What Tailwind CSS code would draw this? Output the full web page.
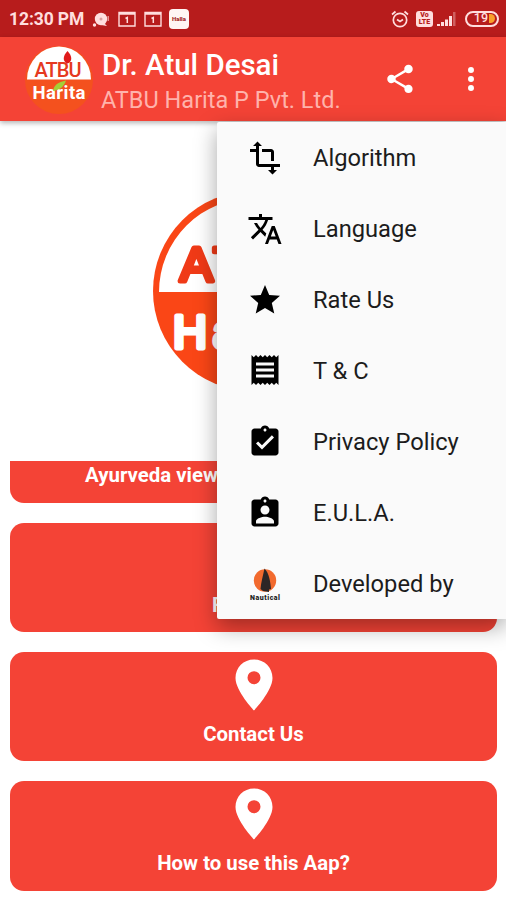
<!DOCTYPE html>
<html lang="en">
  <head>
    <meta charset="UTF-8" />
    <meta name="viewport" content="width=device-width, initial-scale=1.0" />
    <title>ATBU Harita</title>
    <script src="https://cdn.jsdelivr.net/npm/@tailwindcss/browser@4"></script>
  </head>
  <body class="bg-white font-['Roboto',sans-serif]">
    <div class="relative flex h-[900px] w-[506px] flex-col overflow-hidden bg-white">
      <!-- Status bar -->
      <div class="flex h-[37px] shrink-0 items-center bg-[#b71c1c] pt-[2px] pl-[9px] pr-[7px] text-[#ffdede]">
        <span class="w-[83px] whitespace-nowrap text-[17.500px] font-bold tracking-[-0.100px]">12:30 PM</span>
        <svg class="h-4 w-[18px]" viewBox="0 0 18 16" fill="currentColor">
          <circle cx="9" cy="7" r="6.200" />
          <circle cx="2.500" cy="13" r="1.700" />
          <path d="M11 10l4 4-6-1z" />
          <path d="M15.500 4h1.500v5h-1.500z" opacity=".6" />
          <circle cx="9" cy="7" r="1.500" fill="#dba0a0" />
        </svg>
        <svg class="ml-[8px] h-4 w-[18px] -translate-y-px" viewBox="0 0 18 16" fill="none" stroke="currentColor">
          <path d="M1 1.500h16v13.500H1z" stroke-width="1.400" />
          <path d="M1 2.500h16" stroke-width="2.500" />
          <path d="M7.500 7.500L9.300 6.500v5.500" stroke-width="1.500" />
        </svg>
        <svg class="ml-[8px] h-4 w-[18px] -translate-y-px" viewBox="0 0 18 16" fill="none" stroke="currentColor">
          <path d="M1 1.500h16v13.500H1z" stroke-width="1.400" />
          <path d="M1 2.500h16" stroke-width="2.500" />
          <path d="M7.500 7.500L9.300 6.500v5.500" stroke-width="1.500" />
        </svg>
        <div class="ml-[7px] flex h-5 w-5 -translate-y-px items-center justify-center rounded-[4px] bg-[#fff6f4] text-[6px] font-black text-[#a32b2b]">Halla</div>
        <svg class="ml-auto h-[18px] w-[18px] -translate-y-px" viewBox="0 0 18 18" fill="none" stroke="currentColor" stroke-width="1.700">
          <circle cx="9" cy="10" r="6.700" />
          <path d="M1 4.500L4.500 1.500M17 4.500L13.500 1.500M6 9.500l3 2 3-2" />
        </svg>
        <div class="ml-[7px] flex h-4 w-[17px] -translate-y-px flex-col items-center justify-center rounded-[3px] bg-[#ffdede] text-[7px] leading-[7px] font-black text-[#b71c1c]">
          <span>Vo</span><span>LTE</span>
        </div>
        <svg class="ml-[4px] h-4 w-[20px] -translate-y-px" viewBox="0 0 20 16" fill="currentColor">
          <path d="M0 13h3v2H0zM4 11h3v4H4zM8 8.500h3V15H8zM12 5h3v10h-3z" />
          <path d="M16 1h2.500v14H16z" opacity=".35" />
        </svg>
        <div class="ml-[8px] flex h-4 w-[34px] -translate-y-px items-center justify-end rounded-full border-2 border-[#ffdede] pr-[2px] text-[12.500px] leading-none font-medium">
          19<span class="ml-px h-[9px] w-[6px] rounded-r-full bg-[#f9a02b]"></span>
        </div>
      </div>

      <!-- App bar -->
      <div class="z-10 flex h-[84px] shrink-0 items-center bg-[#f44336] pl-[25px] shadow-[0_2px_5px_rgba(0,0,0,0.3)]">
        <svg class="h-[70px] w-[68px] shrink-0" viewBox="0 0 68 70">
          <circle cx="34" cy="36" r="34" fill="#f4511e" />
          <path d="M2 35.500a32 33 0 0 1 64 0z" fill="#fff" />
          <text x="33" y="33" text-anchor="middle" font-family="Roboto" font-size="20" font-weight="500" fill="#e53920" textLength="47">ATBU</text>
          <path d="M42.500 7c5 5 5 11 0 12.500c-5-1.500-5-7.500 0-12.500z" fill="#e01b1b" />
          <text x="34" y="54.500" text-anchor="middle" font-family="Roboto" font-size="18.500" font-weight="700" fill="#fff" textLength="53">Harita</text>
          <path d="M28 47c1-6 5-9 13-10.500c-2 6-6 9.500-13 10.500z" fill="#a4d037" />
        </svg>
        <div class="ml-[8px] flex w-[285px] shrink-0 flex-col pt-[8px] whitespace-nowrap">
          <span class="pl-px text-[29.500px] leading-[34px] font-medium tracking-[-0.020px] text-white">Dr. Atul Desai</span>
          <span class="text-[23.500px] leading-[36px] text-[#ffb3ac]">ATBU Harita P Pvt. Ltd.</span>
        </div>
        <svg class="h-[34px] w-[34px] shrink-0 -translate-x-[3px]" viewBox="0 0 24 24" fill="#fff">
          <path d="M18 16.080c-.76 0-1.440.3-1.960.77L8.910 12.700c.05-.23.09-.46.09-.7s-.04-.47-.09-.7l7.050-4.110c.54.5 1.250.81 2.040.81 1.660 0 3-1.340 3-3s-1.340-3-3-3-3 1.340-3 3c0 .24.04.47.09.7L8.040 9.810C7.500 9.310 6.790 9 6 9c-1.660 0-3 1.340-3 3s1.340 3 3 3c.79 0 1.500-.31 2.040-.81l7.120 4.160c-.05.21-.08.43-.08.65 0 1.610 1.310 2.920 2.920 2.920s2.920-1.310 2.920-2.920-1.310-2.920-2.920-2.920z" />
        </svg>
        <svg class="ml-[34px] h-[34px] w-[34px] shrink-0" viewBox="0 0 24 24" fill="#fff">
          <circle cx="12" cy="5.700" r="2.100" /><circle cx="12" cy="12" r="2.100" /><circle cx="12" cy="18.300" r="2.100" />
        </svg>
      </div>

      <!-- Page content -->
      <div class="flex h-[340px] shrink-0 justify-center pt-[70px]">
        <svg class="h-[200px] w-[200px]" viewBox="0 0 200 200">
          <circle cx="100" cy="100" r="100" fill="#fa4616" />
          <path d="M6 101a94 94 0 0 1 188 0z" fill="#fff" />
          <text x="27" y="90" font-family="Liberation Sans" font-size="49" fill="#f03a17" stroke="#f03a17" stroke-width="5" stroke-linejoin="round" textLength="140">ATBU</text>
          <text x="20" y="156.500" font-family="Liberation Sans" font-size="47" fill="#fff" stroke="#fff" stroke-width="5" stroke-linejoin="round" textLength="155">Harita</text>
        </svg>
      </div>
      <div class="flex flex-col gap-5 pr-[9px] pl-[10px] text-center text-[20.400px] font-bold text-white">
        <div class="h-[41.500px] rounded-b-[14px] bg-[#f44336] pt-[2px] pl-[75px] text-left leading-[24px] whitespace-nowrap">Ayurveda view</div>
        <div class="h-[109.500px] rounded-[14px] bg-[#f44336] pt-[70px] pl-[202px] text-left leading-[24px]">FAQ</div>
        <div class="flex h-[109px] flex-col items-center rounded-[14px] bg-[#f44336] pt-[7px]">
          <svg class="h-[52px] w-[38px]" viewBox="0 0 38 52" fill="#fff">
            <path fill-rule="evenodd" d="M19 0.500C8.500 0.500 .500 8.500 .500 19C.500 32 19 51.500 19 51.500S37.500 32 37.500 19C37.500 8.500 29.500 .500 19 .500zM19 12.200a6.500 6.500 0 1 1 0 13a6.500 6.500 0 0 1 0-13z" />
          </svg>
          <span class="mt-[11px] leading-[24px]">Contact Us</span>
        </div>
        <div class="flex h-[110px] flex-col items-center rounded-[14px] bg-[#f44336] pt-[7px]">
          <svg class="h-[52px] w-[38px]" viewBox="0 0 38 52" fill="#fff">
            <path fill-rule="evenodd" d="M19 0.500C8.500 0.500 .500 8.500 .500 19C.500 32 19 51.500 19 51.500S37.500 32 37.500 19C37.500 8.500 29.500 .500 19 .500zM19 12.200a6.500 6.500 0 1 1 0 13a6.500 6.500 0 0 1 0-13z" />
          </svg>
          <span class="mt-[11px] leading-[24px]">How to use this Aap?</span>
        </div>
      </div>

      <!-- Overflow menu -->
      <div class="absolute top-[122px] right-0 z-20 h-[497px] w-[289px] rounded-l-[2px] bg-[#fafafa] text-[23.700px] text-[#1c1c1c] shadow-[0_8px_22px_rgba(0,0,0,0.35)]">
        <div class="flex h-[71px] items-center pl-[30px]">
          <svg class="mr-[30px] h-9 w-9" viewBox="0 0 24 24" fill="#000">
            <path d="M22 18v-2H8V4h2L7 1 4 4h2v2H2v2h4v8c0 1.100.9 2 2 2h8v2h-2l3 3 3-3h-2v-2h4zM10 8h6v6h2V8c0-1.100-.9-2-2-2h-6v2z" />
          </svg>
          <span class="pt-[2px]">Algorithm</span>
        </div>
        <div class="flex h-[71px] items-center pl-[30px]">
          <svg class="mr-[30px] h-9 w-9" viewBox="0 0 24 24" fill="#000">
            <path d="M12.870 15.070l-2.540-2.510.03-.03c1.740-1.940 2.980-4.170 3.710-6.530H17V4h-7V2H8v2H1v1.990h11.170C11.500 7.920 10.440 9.750 9 11.350 8.070 10.320 7.300 9.190 6.690 8h-2c.73 1.630 1.730 3.170 2.980 4.560l-5.090 5.020L4 19l5-5 3.110 3.110.76-2.040zM18.500 10h-2L12 22h2l1.120-3h4.750L21 22h2l-4.500-12zm-2.620 7l1.620-4.330L19.120 17h-3.240z" />
          </svg>
          <span class="pt-[2px]">Language</span>
        </div>
        <div class="flex h-[71px] items-center pl-[30px]">
          <svg class="mr-[30px] h-9 w-9" viewBox="0 0 24 24" fill="#000">
            <path d="M12 17.270L18.180 21l-1.640-7.030L22 9.240l-7.190-.61L12 2 9.190 8.630 2 9.240l5.460 4.730L5.820 21z" />
          </svg>
          <span class="pt-[2px]">Rate Us</span>
        </div>
        <div class="flex h-[71px] items-center pl-[30px]">
          <svg class="mr-[30px] h-9 w-9 -translate-y-px" viewBox="0 0 24 24" fill="#000">
            <path d="M18 17H6v-2h12v2zm0-4H6v-2h12v2zm0-4H6V7h12v2zM3 22l1.500-1.500L6 22l1.500-1.500L9 22l1.500-1.500L12 22l1.500-1.500L15 22l1.500-1.500L18 22l1.500-1.500L21 22V2l-1.500 1.500L18 2l-1.500 1.500L15 2l-1.500 1.500L12 2l-1.500 1.500L9 2 7.500 3.500 6 2 4.500 3.500 3 2v20z" />
          </svg>
          <span class="pt-[2px]">T &amp; C</span>
        </div>
        <div class="flex h-[71px] items-center pl-[30px]">
          <svg class="mr-[30px] h-9 w-9" viewBox="0 0 24 24" fill="#000">
            <path d="M19 3h-4.180C14.400 1.840 13.300 1 12 1c-1.300 0-2.400.84-2.820 2H5c-1.100 0-2 .9-2 2v14c0 1.100.9 2 2 2h14c1.100 0 2-.9 2-2V5c0-1.100-.9-2-2-2zm-7 0c.55 0 1 .45 1 1s-.45 1-1 1-1-.45-1-1 .45-1 1-1zm-2 14l-4-4 1.410-1.410L10 14.170l6.590-6.590L18 9l-8 8z" />
          </svg>
          <span class="pt-[2px]">Privacy Policy</span>
        </div>
        <div class="flex h-[71px] items-center pl-[30px]">
          <svg class="mr-[30px] h-9 w-9" viewBox="0 0 24 24" fill="#000">
            <path d="M19 3h-4.180C14.400 1.840 13.300 1 12 1c-1.300 0-2.400.84-2.820 2H5c-1.100 0-2 .9-2 2v14c0 1.100.9 2 2 2h14c1.100 0 2-.9 2-2V5c0-1.100-.9-2-2-2zm-7 0c.55 0 1 .45 1 1s-.45 1-1 1-1-.45-1-1 .45-1 1-1zm0 4c1.660 0 3 1.340 3 3s-1.340 3-3 3-3-1.340-3-3 1.340-3 3-3zm6 12H6v-1.400c0-2 4-3.100 6-3.100s6 1.100 6 3.100V19z" />
          </svg>
          <span class="pt-[2px]">E.U.L.A.</span>
        </div>
        <div class="flex h-[71px] items-center pl-[30px]">
          <svg class="mr-[30px] h-9 w-9" viewBox="0 0 36 36">
            <circle cx="18" cy="14.500" r="11.200" fill="#f26a2e" />
            <path d="M17.500 2.500c-1.500 7-3.500 14-4 20.500l2.500 2 6 1v-2.500l2-.5c-.5-7-2-16-6.500-20.500z" fill="#2c2626" />
            <text x="18" y="33.500" text-anchor="middle" font-family="Roboto" font-size="7" font-weight="900" fill="#222" textLength="30">Nautical</text>
          </svg>
          <span class="pt-[2px]">Developed by</span>
        </div>
      </div>
    </div>
  </body>
</html>
